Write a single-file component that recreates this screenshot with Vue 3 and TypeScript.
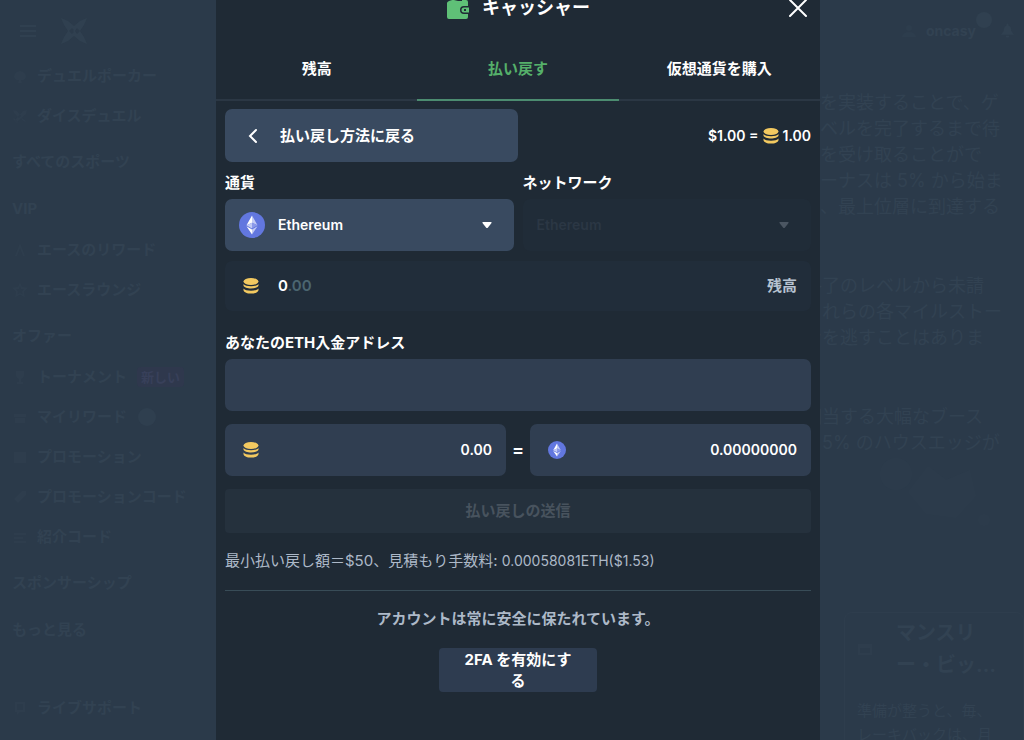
<script setup lang="ts">
import { ref } from 'vue'

interface NavEntry {
  label: string
  section?: boolean
  icon?: string
  badge?: string
  dot?: boolean
}

const nav: NavEntry[] = [
  { label: 'デュエルポーカー', icon: 'M2 9a6 6 0 0 1 12 0a4 4 0 0 1-5 3l1 3H6l1-3a4 4 0 0 1-5-3Z' },
  { label: 'ダイスデュエル', icon: 'M1 2l4 1 4 5-2 2-5-5ZM15 2l-4 1-8 9 2 2 9-8ZM10 10l4 3-1 1-4-3ZM2 10l4 4-1 1-4-4Z' },
  { label: 'すべてのスポーツ', section: true },
  { label: 'VIP', section: true },
  { label: 'エースのリワード', icon: 'M8 1l5 13h-2L8 6l-3 8H3Z' },
  { label: 'エースラウンジ', icon: 'M8 0l2 5 6 .5-4 4 1 6-5-3-5 3 1-6-4-4L6 5ZM8 4L7 7l-3 .5 2 2-.5 3L8 11l2.500 1.500L10 9.500l2-2L9 7Z' },
  { label: 'オファー', section: true },
  { label: 'トーナメント', icon: 'M4 2h8v4a4 4 0 0 1-3 4v3h2v2H5v-2h2v-3a4 4 0 0 1-3-4Z', badge: '新しい' },
  { label: 'マイリワード', icon: 'M2 5h12v3H2ZM3 9h10v5H3Z', dot: true },
  { label: 'プロモーション', icon: 'M2 3h12v11H2Z' },
  { label: 'プロモーションコード', icon: 'M2 10l8-8h4v4l-8 8Z' },
  { label: '紹介コード', icon: 'M2 4h12v2H2ZM2 8h9v2H2ZM2 12h12v2H2Z' },
  { label: 'スポンサーシップ', section: true },
  { label: 'もっと見る', section: true },
]

const paragraphs: string[][] = [
  ['を実装することで、ゲ', 'ベルを完了するまで待', 'を受け取ることがで', 'ーナスは 5% から始ま', '、最上位層に到達する'],
  ['終了のレベルから未請', 'これらの各マイルストー', 'ンを逃すことはありま'],
  ['相当する大幅なブース', '、5% のハウスエッジが'],
]

const tabs = ['残高', '払い戻す', '仮想通貨を購入']
const activeTab = ref(1)
const currency = ref('Ethereum')
const network = ref('Ethereum')
const address = ref('')
const coins = ref('0.00')
const eth = ref('0.00000000')
</script>

<template>
  <div class="app">
    <div class="page">
      <aside class="sidebar">
        <div class="brand">
          <svg class="menu" viewBox="0 0 16 14"><path d="M0 1h16v2H0ZM0 6h16v2H0ZM0 11h16v2H0Z" /></svg>
          <svg class="logo" viewBox="0 0 28 28">
            <path d="M1 1l7 3 6 5 6-5 7-3-3 7-4 6 4 6 3 7-7-3-6-5-6 5-7 3 3-7 4-6-4-6Z" />
            <path class="cut" d="M9 14l3-3 2 2-1 1 1 1-2 2ZM15 14l2-3 3 3-3 3Z" />
          </svg>
        </div>
        <nav>
          <a v-for="n in nav" :key="n.label" href="#" :class="n.section ? 'section' : 'item'">
            <svg v-if="n.icon" class="nav-icon" viewBox="0 0 16 16"><path :d="n.icon" fill-rule="evenodd" /></svg>
            <span>{{ n.label }}</span>
            <span v-if="n.badge" class="badge">{{ n.badge }}</span>
            <span v-if="n.dot" class="dot"></span>
          </a>
          <a href="#" class="item support">
            <svg class="nav-icon" viewBox="0 0 16 16"><path d="M3 2h10v10H8l-3 3v-3H3ZM5 4v6h6V4Z" fill-rule="evenodd" /></svg>
            <span>ライブサポート</span>
          </a>
        </nav>
      </aside>
      <main class="content">
        <header class="top">
          <svg class="user" viewBox="0 0 16 16"><circle cx="8" cy="5" r="3" /><path d="M1 14a7 5 0 0 1 14 0Z" /></svg>
          <span>oncasy</span>
          <span class="count"></span>
          <svg class="bell" viewBox="0 0 16 16"><path d="M8 0c1 0 1 1 1 2 3 1 3 4 3 6l3 4H1l3-4c0-2 0-5 3-6 0-1 0-2 1-2ZM6 13h4a2 2 0 0 1-4 0Z" /></svg>
        </header>
        <p v-for="(p, i) in paragraphs" :key="i" class="para" :class="{ first: i === 0 }">
          <span v-for="line in p" :key="line">{{ line }}</span>
        </p>
        <svg class="art" viewBox="0 0 120 80">
          <circle cx="20" cy="16" r="16" /><path d="M52 8l18 14 24-10 6 26-20 22-30-4-18-22Z" /><circle cx="108" cy="62" r="6" />
        </svg>
        <article class="card">
          <div class="card-head">
            <svg class="nav-icon" viewBox="0 0 16 16"><path d="M1 3h14v11H1ZM3 7v5h10V7Z" fill-rule="evenodd" /></svg>
            <h3>マンスリ<br />ー・ビッ…</h3>
          </div>
          <p>準備が整うと、毎、<br />レーキバックは、月</p>
        </article>
      </main>
    </div>

    <div class="overlay">
      <section class="modal" role="dialog" aria-labelledby="title">
        <header class="modal-head">
          <svg class="wallet" viewBox="0 0 24 24">
            <path d="M3 5L16 1q2-.5 2 1v2h2q2 0 2 2v4h-4a4 4 0 0 0 0 8h4v3q0 2-2 2H3q-2 0-2-2V7q0-1 2-2Zm5 0h8V3Z" fill-rule="evenodd" />
            <path d="M18 11.500h5v5h-5a2.500 2.500 0 0 1 0-5Zm0 1.500v2h2v-2Z" fill-rule="evenodd" />
          </svg>
          <h2 id="title">キャッシャー</h2>
          <button class="close" aria-label="閉じる">
            <svg viewBox="0 0 20 20"><path d="M2 2l16 16M18 2L2 18" /></svg>
          </button>
        </header>

        <div class="tabs" role="tablist">
          <button v-for="(t, i) in tabs" :key="t" role="tab" :aria-selected="i === activeTab" :class="{ active: i === activeTab }" @click="activeTab = i">{{ t }}</button>
        </div>

        <form class="body" @submit.prevent>
          <div class="back-row">
            <button type="button" class="back">
              <svg viewBox="0 0 10 16"><path d="M8 2L2 8l6 6" /></svg>
              払い戻し方法に戻る
            </button>
            <div class="rate">
              <span>$1.00 =</span>
              <svg class="coins" viewBox="0 0 16 16"><ellipse cx="8" cy="3.500" rx="7.500" ry="3.500" /><path d="M.5 6c2 3 13 3 15 0v1.500c-1 4-14 4-15 0ZM.5 10.500c2 3 13 3 15 0v1.700c-1 4.500-14 4.500-15 0Z" /></svg>
              <span>1.00</span>
            </div>
          </div>

          <div class="pair">
            <div class="field">
              <label for="currency">通貨</label>
              <div class="box select-box">
                <svg class="eth" viewBox="0 0 26 26"><circle cx="13" cy="13" r="13" /><path class="hi" d="M13 3.500L7.500 13.200 13 10.700ZM7.500 14.300L13 22.500V17.500Z" /><path class="mid" d="M13 3.500l5.500 9.700L13 10.700ZM18.500 14.300L13 22.500V17.500ZM7.500 13.200L13 10.700V16.400Z" /><path class="lo" d="M13 10.700l5.500 2.500L13 16.400Z" /></svg>
                <select id="currency" v-model="currency"><option>Ethereum</option></select>
                <svg class="caret" viewBox="0 0 10 6"><path d="M1 0h8q1 0 .5 1L6 5.500q-1 1-2 0L.5 1Q0 0 1 0Z" /></svg>
              </div>
            </div>
            <div class="field">
              <label for="network">ネットワーク</label>
              <div class="box select-box off">
                <select id="network" v-model="network" disabled><option>Ethereum</option></select>
                <svg class="caret" viewBox="0 0 10 6"><path d="M1 0h8q1 0 .5 1L6 5.500q-1 1-2 0L.5 1Q0 0 1 0Z" /></svg>
              </div>
            </div>
          </div>

          <div class="balance">
            <svg class="coins" viewBox="0 0 16 16"><ellipse cx="8" cy="3.500" rx="7.500" ry="3.500" /><path d="M.5 6c2 3 13 3 15 0v1.500c-1 4-14 4-15 0ZM.5 10.500c2 3 13 3 15 0v1.700c-1 4.500-14 4.500-15 0Z" /></svg>
            <span class="amount">0<span class="cents">.00</span></span>
            <span class="balance-label">残高</span>
          </div>

          <div class="field address">
            <label for="address">あなたのETH入金アドレス</label>
            <input id="address" v-model="address" class="box" type="text" />
          </div>

          <div class="convert">
            <div class="box num">
              <svg class="coins" viewBox="0 0 16 16"><ellipse cx="8" cy="3.500" rx="7.500" ry="3.500" /><path d="M.5 6c2 3 13 3 15 0v1.500c-1 4-14 4-15 0ZM.5 10.500c2 3 13 3 15 0v1.700c-1 4.500-14 4.500-15 0Z" /></svg>
              <input v-model="coins" type="text" aria-label="コイン" />
            </div>
            <span class="equals">=</span>
            <div class="box num">
              <svg class="eth small" viewBox="0 0 26 26"><circle cx="13" cy="13" r="13" /><path class="hi" d="M13 3.500L7.500 13.200 13 10.700ZM7.500 14.300L13 22.500V17.500Z" /><path class="mid" d="M13 3.500l5.500 9.700L13 10.700ZM18.500 14.300L13 22.500V17.500ZM7.500 13.200L13 10.700V16.400Z" /><path class="lo" d="M13 10.700l5.500 2.500L13 16.400Z" /></svg>
              <input v-model="eth" type="text" aria-label="ETH" />
            </div>
          </div>

          <button class="submit" disabled>払い戻しの送信</button>
          <p class="note">最小払い戻し額＝$50、見積もり手数料: <span class="fee">0.00058081ETH($1.53)</span></p>
          <hr />
          <p class="safe">アカウントは常に安全に保たれています。</p>
          <button type="button" class="twofa">2FA を有効にする</button>
        </form>
      </section>
    </div>
  </div>
</template>

<style>
body {
  margin: 0;
  background: #2b3a4a;
}
</style>

<style scoped>
* {
  box-sizing: border-box;
}
.app {
  position: relative;
  height: 100vh;
  overflow: hidden;
  background: #2b3a4a;
  font: 700 15px/20px Inter, "Noto Sans CJK JP", sans-serif;
  color: #fff;
}
button,
input,
select {
  font: inherit;
  color: inherit;
  border: 0;
  padding: 0;
  margin: 0;
  background: none;
}
h2,
h3,
p {
  margin: 0;
}
svg {
  flex: none;
  display: block;
}

.page {
  display: grid;
  grid-template-columns: 216px minmax(0, 1fr);
  height: 100%;
  color: #324252;
  fill: #304050;
}
.sidebar {
  padding-left: 12px;
}
.brand {
  display: flex;
  align-items: center;
  gap: 24px;
  height: 56px;
  padding: 6px 0 0 8px;
}
.menu {
  width: 16px;
  height: 14px;
}
.logo {
  width: 28px;
  height: 28px;
}
.cut {
  fill: #2b3a4a;
}
.item,
.section {
  display: flex;
  align-items: center;
  height: 40px;
  color: inherit;
  text-decoration: none;
  white-space: nowrap;
}
.section {
  height: 42px;
  margin-top: 5px;
}
.nav-icon {
  width: 16px;
  height: 16px;
  margin-right: 9px;
  opacity: 0.6;
}
.badge {
  margin-left: 10px;
  padding: 0 4px;
  border-radius: 4px;
  background: #2f384d;
  color: #38405a;
  font-size: 13px;
}
.dot {
  width: 18px;
  height: 18px;
  margin-left: 11px;
  border-radius: 50%;
  background: #2f3f4f;
}
.support {
  margin-top: 37px;
}
.content {
  padding-left: 582px;
  overflow: hidden;
}
.top {
  display: flex;
  justify-content: flex-end;
  align-items: center;
  height: 62px;
  margin-bottom: 28px;
  padding-right: 9px;
  font-size: 14px;
}
.user {
  width: 16px;
  height: 16px;
  margin-right: 9px;
  opacity: 0.5;
}
.count {
  width: 16px;
  height: 16px;
  margin: 0 8px 22px 0;
  border-radius: 50%;
  background: #304050;
}
.bell {
  width: 15px;
  height: 16px;
}
.para {
  margin: 0 0 53px 6px;
  font-weight: 400;
  font-size: 18px;
  line-height: 26px;
  white-space: nowrap;
}
.first {
  margin-left: 22px;
}
.para span {
  display: block;
}
.art {
  width: 120px;
  height: 80px;
  margin: -51px 0 0 78px;
  opacity: 0.25;
}
.card {
  height: 180px;
  margin: 74px 0 0 46px;
  padding: 4px 8px 0 12px;
  border: 1px solid #2e3d4d;
  border-radius: 8px;
  font-weight: 400;
  line-height: 24px;
  white-space: nowrap;
}
.card-head {
  display: flex;
  align-items: center;
  gap: 14px;
  margin-bottom: 18px;
}
.card h3 {
  font-size: 20px;
  line-height: 32px;
}

.overlay {
  position: absolute;
  inset: 0;
  display: grid;
  grid-template-columns: 216px minmax(0, 604px) 1fr;
}
.modal {
  grid-column: 2;
  background: #1f2a35;
}
.modal-head {
  display: grid;
  grid-template-columns: 1fr auto auto 1fr;
  align-items: center;
  align-content: center;
  height: 38px;
  padding: 0 12px 22px;
}
.wallet {
  grid-column: 2;
  width: 24px;
  height: 24px;
  margin-right: 12px;
  fill: #5fc077;
}
h2 {
  font-size: 18px;
  line-height: 20px;
}
.close {
  justify-self: end;
}
.close svg {
  width: 20px;
  height: 20px;
  stroke: #fff;
  stroke-width: 2;
  stroke-linecap: round;
}
.tabs {
  display: grid;
  grid-template-columns: repeat(3, 1fr);
}
.tabs button {
  height: 63px;
  border-bottom: 2px solid #2b3744;
}
.tabs .active {
  color: #55b06a;
  border-color: #4c8c70;
}
.body {
  padding: 8px 9px 0;
}
.back-row {
  display: flex;
  justify-content: space-between;
  align-items: center;
}
.back {
  display: flex;
  align-items: center;
  gap: 22px;
  width: 50%;
  height: 53px;
  padding-left: 23px;
  border-radius: 7px;
  background: #394a60;
}
.back svg {
  width: 10px;
  height: 16px;
  fill: none;
  stroke: #fff;
  stroke-width: 2;
  stroke-linecap: round;
}
.rate {
  display: flex;
  align-items: center;
  gap: 4px;
  font-weight: 600;
  font-size: 14px;
}
.coins {
  width: 16px;
  height: 16px;
  fill: #f3c960;
}
.pair {
  display: grid;
  grid-template-columns: 1fr 1fr;
  gap: 9px;
  margin-top: 11px;
}
.field label {
  display: block;
  margin-bottom: 6px;
}
.box {
  width: 100%;
  height: 52px;
  border-radius: 7px;
  background: #303e51;
}
.select-box {
  display: flex;
  align-items: center;
  padding: 0 22px 0 14px;
  background: #394a60;
  font-weight: 600;
  font-size: 14px;
}
.select-box select {
  flex: 1;
  min-width: 0;
  appearance: none;
  opacity: 1;
  outline: 0;
}
.eth {
  width: 26px;
  height: 26px;
  margin-right: 13px;
  fill: #6277df;
}
.eth .hi {
  fill: #fff;
}
.eth .mid {
  fill: #c3cbf5;
}
.eth .lo {
  fill: #8b9aea;
}
.eth.small {
  width: 18px;
  height: 18px;
}
.caret {
  width: 10px;
  height: 6px;
  fill: #fff;
}
.off {
  background: #202c38;
  color: #2b3744;
}
.off .caret {
  fill: #4b5662;
}
.balance {
  display: flex;
  align-items: center;
  height: 50px;
  margin-top: 10px;
  padding: 0 14px 0 18px;
  border-radius: 7px;
  background: #212d3a;
}
.amount {
  flex: 1;
  margin-left: 19px;
  font-weight: 600;
}
.cents {
  color: #4b6570;
}
.balance-label {
  color: #b6c2d0;
}
.address {
  margin-top: 22px;
}
.address .box {
  display: block;
  padding: 0 14px;
}
.convert {
  display: flex;
  align-items: center;
  margin-top: 13px;
}
.num {
  display: flex;
  flex: 1;
  align-items: center;
  min-width: 0;
  padding: 0 14px 0 18px;
}
.num input {
  flex: 1;
  min-width: 0;
  text-align: right;
  font-weight: 600;
  font-size: 14px;
}
.equals {
  width: 24px;
  text-align: center;
  font-size: 18px;
  font-weight: 600;
}
.submit {
  display: block;
  width: 100%;
  height: 44px;
  margin-top: 13px;
  border-radius: 4px;
  background: #25313d;
  color: #48535e;
}
.note {
  margin-top: 18px;
  color: #adb9c8;
  font-weight: 400;
}
.fee {
  font-size: 14px;
}
hr {
  height: 1px;
  margin: 19px 0 18px;
  border: 0;
  background: #384c57;
}
.safe {
  text-align: center;
  color: #adb9c8;
}
.twofa {
  display: block;
  width: 158px;
  height: 44px;
  margin: 19px auto 0;
  padding: 0 24px;
  border-radius: 4px;
  background: #2e3c50;
  line-height: 21px;
  word-break: break-all;
}
</style>
